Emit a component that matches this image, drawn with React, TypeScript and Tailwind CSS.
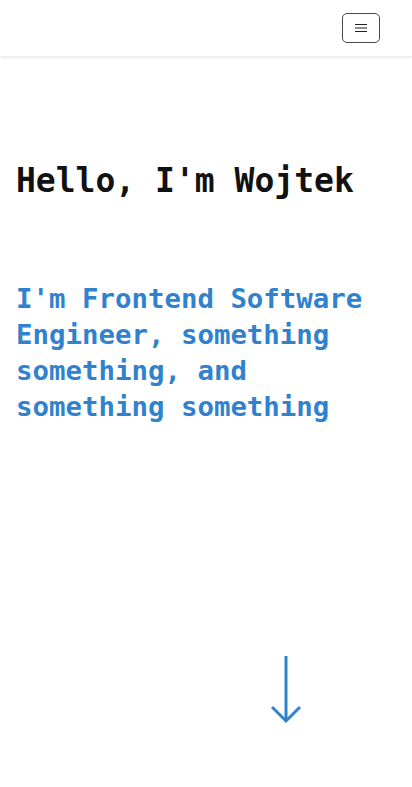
import type { FC } from 'react'

const mono = "font-['DejaVu_Sans_Mono',monospace]"

const MenuButton: FC = () => (
  <button
    type="button"
    aria-label="menu"
    className="w-[38px] h-[30px] rounded-[5px] border border-[#4a4a4a] flex items-center justify-center bg-white"
  >
    <svg width="12" height="10" viewBox="0 0 12 10" fill="none">
      <path d="M0 1.5H12M0 5H12M0 8.5H12" stroke="#222" strokeWidth="1.2" />
    </svg>
  </button>
)

const ArrowDown: FC = () => (
  <svg width="32" height="72" viewBox="0 0 32 72" fill="none">
    <path d="M16 2V67M2 53L16 67L30 53" stroke="#3182ce" strokeWidth="3" />
  </svg>
)

export default function App() {
  return (
    <div className={`min-h-[787px] bg-white ${mono}`}>
      <header className="h-14 flex items-center justify-end px-8 shadow-[0_1px_4px_rgba(0,0,0,0.12)]">
        <MenuButton />
      </header>
      <main className="px-4">
        <h1 className="pt-[105px] text-[33px] leading-[40px] font-bold text-[#111]">Hello, I'm Wojtek</h1>
        <h2 className="mt-[80px] text-[27.4px] leading-[36px] font-bold text-[#3182ce]">
          I'm Frontend Software Engineer, something something, and something something
        </h2>
        <div className="mt-[229px] flex justify-center pl-[160px]">
          <ArrowDown />
        </div>
      </main>
    </div>
  )
}
